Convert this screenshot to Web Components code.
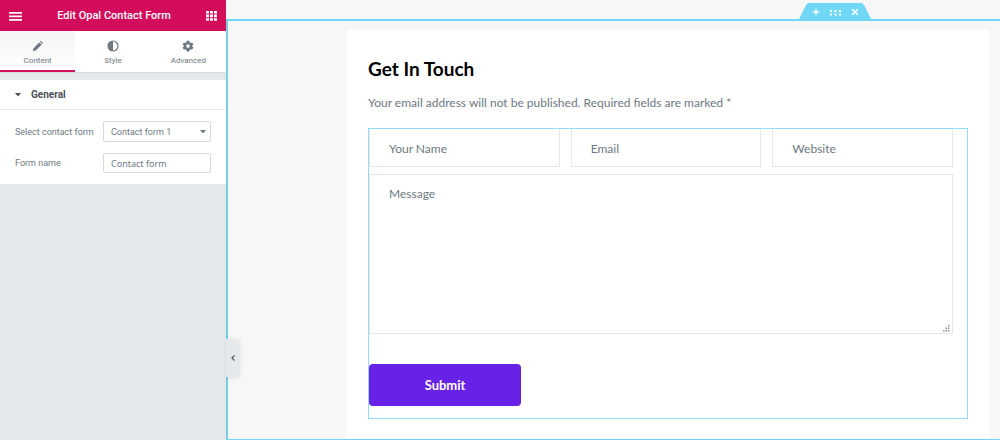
<!DOCTYPE html>
<html lang="en">
<head>
<meta charset="utf-8">
<meta name="viewport" content="width=device-width, initial-scale=1">
<title>Edit Opal Contact Form</title>
<style>
  body {
    margin: 0;
    background-color: #f7f7f7;
    font-family: Roboto, sans-serif;
  }
</style>
</head>
<body>
<editor-app>
  <editor-panel slot="panel" heading="Edit Opal Contact Form">
    <panel-tab slot="tabs" label="Content" active>
      <svg viewBox="0 0 12 12" width="12" height="12" fill="currentColor"><path d="M8.8.9 11.100 3.200 10.200 4.100 7.900 1.800zM7.300 2.400 9.600 4.700 3.800 10.500.9 11.200 1.500 8.200z"/></svg>
    </panel-tab>
    <panel-tab slot="tabs" label="Style">
      <svg viewBox="0 0 12 12" width="12" height="12"><circle cx="6" cy="6" r="5" fill="none" stroke="currentColor" stroke-width="1.2"/><path d="M6 1a5 5 0 0 0 0 10z" fill="currentColor"/></svg>
    </panel-tab>
    <panel-tab slot="tabs" label="Advanced">
      <svg viewBox="0 0 12 12" width="12" height="12" fill="currentColor" fill-rule="evenodd"><path d="M4.700.8h2.600l.3 1.500 1 .6 1.500-.5 1.300 2.200-1.200 1v1l1.200 1-1.300 2.200-1.500-.5-1 .6-.3 1.500H4.700l-.3-1.500-1-.6-1.500.5L.6 7.600l1.200-1v-1l-1.200-1 1.300-2.200 1.500.5 1-.6zM6 4.300a1.800 1.800 0 1 0 0 3.600 1.800 1.800 0 0 0 0-3.600z"/></svg>
    </panel-tab>
    <panel-section heading="General"></panel-section>
  </editor-panel>
  <section-frame>
    <contact-form heading="Get In Touch" note="Your email address will not be published. Required fields are marked *"></contact-form>
  </section-frame>
</editor-app>

<script>
class EditorApp extends HTMLElement {
  constructor() {
    super();
    this.attachShadow({ mode: 'open' }).innerHTML = `
    <style>
    :host {
        display: flex;
        min-height: 100vh;
    }

    aside {
        position: relative;
        display: flex;
        flex: 0 0 226px;
    }

    main {
        display: flex;
        flex: 1;
        min-width: 0;
    }

    .toggle {
        position: absolute;
        left: 100%;
        top: 339px;
        z-index: 1;
        display: grid;
        place-items: center;
        width: 13px;
        height: 38px;
        padding: 0;
        border: 0;
        border-radius: 0 3px 3px 0;
        background-color: #e6e9ec;
        color: #556068;
        box-shadow: 1px 1px 4px rgba(0, 0, 0, .1);
        cursor: pointer;
    }
    </style>
    <aside>
        <slot name="panel"></slot>
        <button class="toggle" type="button" aria-label="Hide panel">
            <svg viewBox="0 0 6 8" width="6" height="8" fill="none" stroke="currentColor" stroke-width="1.3"><path d="M4.500 1.500 2 4l2.500 2.500"/></svg>
        </button>
    </aside>
    <main><slot></slot></main>`;
  }
}

class EditorPanel extends HTMLElement {
  connectedCallback() {
    this.attachShadow({ mode: 'open' }).innerHTML = `
    <style>
    :host {
        display: block;
        flex: 1;
        background-color: #e4e8eb;
        color: #6d7882;
    }

    header {
        display: flex;
        align-items: center;
        justify-content: space-between;
        height: 31px;
        padding: 0 9px;
        background-color: #d30c5c;
        color: #fff;
    }

    h1 {
        margin: 0;
        font-size: 11px;
        font-weight: 500;
        line-height: 16px;
    }

    header button {
        display: flex;
        padding: 0;
        border: 0;
        background: none;
        color: inherit;
        cursor: pointer;
    }

    nav {
        display: grid;
        grid-template-columns: repeat(3, 1fr);
        height: 41px;
        margin-bottom: 8px;
        background-color: #fff;
        box-shadow: 0 1px 1px rgba(0, 0, 0, .06);
    }
    </style>
    <header>
        <button type="button" aria-label="Menu">
            <svg viewBox="0 0 13 10" width="13" height="10" fill="currentColor"><path d="M0 1h13v1.800H0zM0 4.500h13v1.800H0zM0 8h13v1.800H0z"/></svg>
        </button>
        <h1>${this.getAttribute('heading')}</h1>
        <button type="button" aria-label="Widgets">
            <svg viewBox="0 0 11 11" width="11" height="11" fill="currentColor"><path d="M0 1h3v2.600H0zM4 1h3v2.600H4zM8 1h3v2.600H8zM0 4.600h3v2.600H0zM4 4.600h3v2.600H4zM8 4.600h3v2.600H8zM0 8.200h3v2.600H0zM4 8.200h3v2.600H4zM8 8.200h3v2.600H8z"/></svg>
        </button>
    </header>
    <nav><slot name="tabs"></slot></nav>
    <slot></slot>`;
  }
}

class PanelTab extends HTMLElement {
  connectedCallback() {
    this.attachShadow({ mode: 'open' }).innerHTML = `
    <style>
    :host {
        display: flex;
    }

    button {
        display: flex;
        flex: 1;
        flex-direction: column;
        align-items: center;
        gap: 3px;
        padding: 9px 0 0;
        border: 0;
        border-bottom: 2px solid transparent;
        background: none;
        color: #6d7882;
        font: 8px/12px Roboto, sans-serif;
        cursor: pointer;
    }

    :host([active]) button {
        border-bottom-color: #d30c5c;
        background-image: linear-gradient(#f3f4f5, #fff);
    }

    ::slotted(svg) {
        display: block;
    }
    </style>
    <button type="button">
        <slot></slot>
        <span>${this.getAttribute('label')}</span>
    </button>`;
  }
}

class PanelSection extends HTMLElement {
  connectedCallback() {
    this.attachShadow({ mode: 'open' }).innerHTML = `
    <style>
    :host {
        display: block;
        background-color: #fff;
    }

    h2 {
        margin: 0;
        border-bottom: 1px solid #e6e9ec;
    }

    h2 button {
        display: flex;
        align-items: center;
        gap: 10px;
        width: 100%;
        height: 29px;
        padding: 0 15px;
        border: 0;
        background: none;
        color: #495157;
        font: 700 10px/16px Roboto, sans-serif;
        cursor: pointer;
    }

    .controls {
        display: grid;
        grid-template-columns: 88px 1fr;
        row-gap: 11px;
        align-items: center;
        padding: 11px 15px;
        font-size: 9px;
        line-height: 16px;
    }

    label {
        white-space: nowrap;
    }

    select,
    input {
        box-sizing: border-box;
        width: 100%;
        height: 20px;
        padding: 0 7px;
        border: 1px solid #d5dadf;
        border-radius: 2px;
        background-color: #fff;
        color: #6d7882;
        font: 9px Roboto, sans-serif;
    }

    select {
        height: 21px;
        appearance: none;
    }

    input {
        font-family: "Noto Sans", sans-serif;
    }

    .select {
        position: relative;
        display: flex;
    }

    .select svg {
        position: absolute;
        right: 5px;
        top: 9px;
        pointer-events: none;
    }
    </style>
    <h2>
        <button type="button" aria-expanded="true">
            <svg viewBox="0 0 6 4" width="6" height="4" fill="currentColor"><path d="M0 0h6L3 3.500z"/></svg>
            ${this.getAttribute('heading')}
        </button>
    </h2>
    <div class="controls">
        <label for="contactForm">Select contact form</label>
        <div class="select">
            <select id="contactForm"><option>Contact form 1</option></select>
            <svg viewBox="0 0 6 4" width="6" height="4" fill="currentColor"><path d="M0 0h6L3 3.500z"/></svg>
        </div>
        <label for="formName">Form name</label>
        <input id="formName" type="text" value="Contact form">
    </div>`;
  }
}

class SectionFrame extends HTMLElement {
  constructor() {
    super();
    this.attachShadow({ mode: 'open' }).innerHTML = `
    <style>
    :host {
        position: relative;
        display: flex;
        flex: 1;
        box-sizing: border-box;
        min-width: 0;
        margin-top: 19px;
        padding: 9px 10px 0 118px;
        border: 2px solid #71d7f7;
        border-left-color: #77cfe2;
        border-right: 0;
    }

    /* handle that sits on the top edge of the section */
    .handle {
        position: absolute;
        bottom: 100%;
        left: 50%;
        margin-left: 184px;
        display: flex;
        align-items: center;
        justify-content: center;
        gap: 10px;
        width: 74px;
        height: 18px;
        background-color: #71d7f7;
        clip-path: polygon(0 100%, 8px 2px, 10px 0, 64px 0, 66px 2px, 100% 100%);
    }

    .handle button {
        display: flex;
        padding: 0;
        border: 0;
        background: none;
        color: #fff;
        cursor: pointer;
    }
    </style>
    <div class="handle">
        <button type="button" aria-label="Add section"><svg viewBox="0 0 8 8" width="8" height="8" fill="none" stroke="currentColor" stroke-width="1.3"><path d="M4 .8v6.400M.8 4h6.400"/></svg></button>
        <button type="button" aria-label="Edit section"><svg viewBox="0 0 11 7" width="11" height="7" fill="currentColor"><path d="M0 1h2v2H0zM4.500 1h2v2h-2zM9 1h2v2H9zM0 4.500h2v2H0zM4.500 4.500h2v2h-2zM9 4.500h2v2H9z"/></svg></button>
        <button type="button" aria-label="Remove section"><svg viewBox="0 0 8 8" width="8" height="8" fill="none" stroke="currentColor" stroke-width="1.600"><path d="m1.200 1.200 5.600 5.600M6.800 1.200 1.200 6.800"/></svg></button>
    </div>
    <slot></slot>`;
  }
}

class ContactForm extends HTMLElement {
  connectedCallback() {
    this.attachShadow({ mode: 'open' }).innerHTML = `
    <style>
    :host {
        display: block;
        flex: 1;
        min-width: 0;
        padding: 27px 22px 20px;
        border-radius: 3px 3px 0 0;
        background-color: #fff;
        color: #6d7882;
        font: 12px/18px Lato, sans-serif;
    }

    h2 {
        margin: 0 0 13px;
        color: #000;
        font-size: 19px;
        font-weight: 700;
        line-height: 24px;
    }

    p {
        margin: 0 0 16px;
    }

    form {
        padding: 0 14px 12px 0;
        border: 1px solid #8fdff8;
    }

    .fields {
        display: grid;
        grid-template-columns: 19fr 19fr 18fr;
        gap: 11px;
        margin-bottom: 7px;
    }

    input,
    textarea {
        box-sizing: border-box;
        display: block;
        width: 100%;
        min-width: 0;
        margin: 0;
        padding: 10px 19px;
        border: 1px solid #e6e6e6;
        border-radius: 0;
        background-color: #fff;
        color: inherit;
        font: inherit;
    }

    input {
        height: 38px;
        border-top-color: transparent;
    }

    textarea {
        height: 160px;
        resize: none;
    }

    ::placeholder {
        color: #6d7882;
        opacity: 1;
    }

    .message {
        position: relative;
        margin-bottom: 30px;
    }

    .message svg {
        position: absolute;
        right: 3px;
        bottom: 2px;
    }

    .submit {
        display: block;
        width: 152px;
        height: 42px;
        padding: 0;
        border: 0;
        border-radius: 4px;
        background-color: #6821e6;
        color: #fff;
        font: 700 13px/18px Lato, sans-serif;
        cursor: pointer;
    }
    </style>
    <h2>${this.getAttribute('heading')}</h2>
    <p>${this.getAttribute('note')}</p>
    <form>
        <div class="fields">
            <input type="text" placeholder="Your Name" aria-label="Your Name">
            <input type="email" placeholder="Email" aria-label="Email">
            <input type="url" placeholder="Website" aria-label="Website">
        </div>
        <div class="message">
            <textarea placeholder="Message" aria-label="Message"></textarea>
            <svg viewBox="0 0 7 7" width="7" height="7" fill="#888"><path d="M5 0h1.400v1.400H5zM2.600 2.500H4v1.400H2.600zM5 2.500h1.400v1.400H5zM.2 5h1.400v1.400H.2zM2.600 5H4v1.400H2.600zM5 5h1.400v1.400H5z"/></svg>
        </div>
        <button class="submit" type="submit">Submit</button>
    </form>`;
  }
}

customElements.define('editor-app', EditorApp);
customElements.define('editor-panel', EditorPanel);
customElements.define('panel-tab', PanelTab);
customElements.define('panel-section', PanelSection);
customElements.define('section-frame', SectionFrame);
customElements.define('contact-form', ContactForm);
</script>
</body>
</html>
